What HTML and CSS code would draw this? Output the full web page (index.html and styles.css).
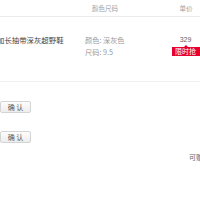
FILE: index.html
```html
<!DOCTYPE html>
<html lang="zh">
<head>
<meta charset="utf-8">
<link rel="stylesheet" href="styles.css">
</head>
<body>
<div class="page">
  <div class="header">
    <span class="h-spec">颜色尺码</span>
    <span class="h-price">单价</span>
  </div>
  <div class="row">
    <div class="name">加长抽带深灰超野鞋</div>
    <div class="spec">
      <div>颜色: 深灰色</div>
      <div>尺码: 9.5</div>
    </div>
    <div class="price">
      <div class="num">329</div>
      <div class="badge">限时抢</div>
    </div>
  </div>
  <div class="actions">
    <button class="btn">确 认</button>
    <button class="btn">确 认</button>
  </div>
  <div class="gift">可赠</div>
</div>
</body>
</html>
```

FILE: styles.css
```css
html, body {
  margin: 0;
  padding: 0;
  background: #fff;
}
body {
  width: 200px;
  height: 200px;
  overflow: hidden;
  font-family: "Noto Sans CJK SC", "Noto Sans", sans-serif;
}
.page {
  width: 200px;
}
.header {
  display: flex;
  align-items: center;
  height: 16px;
  border-bottom: 1px solid #ececec;
  color: #a0a0a0;
  font-size: 6.5px;
}
.h-spec {
  margin-left: 92px;
}
.h-price {
  margin-left: auto;
  width: 28px;
  text-align: center;
}
.row {
  display: flex;
  height: 65px;
  box-sizing: border-box;
  padding-top: 17px;
  border-bottom: 1px solid #f0f0f0;
  font-size: 7px;
  line-height: 12px;
}
.name {
  width: 88px;
  margin-left: -3px;
  color: #444;
  font-size: 7.4px;
  white-space: nowrap;
}
.spec {
  color: #999;
  font-size: 7.2px;
}
.price {
  margin-left: auto;
  width: 29px;
  display: flex;
  flex-direction: column;
  align-items: center;
  color: #666;
}
.num {
  font-family: "Liberation Sans", sans-serif;
}
.badge {
  position: relative;
  margin-top: 1px;
  width: 28px;
  height: 9px;
  line-height: 9px;
  background: #e5002d;
  color: #fff;
  text-align: center;
  font-size: 7px;
}
.badge::before {
  content: "";
  position: absolute;
  left: 12px;
  top: -2px;
  border-left: 2px solid transparent;
  border-right: 2px solid transparent;
  border-bottom: 2px solid #e5002d;
}
.actions {
  display: flex;
  flex-direction: column;
  align-items: flex-start;
  gap: 18px;
  padding-top: 19px;
}
.btn {
  width: 31px;
  height: 12px;
  padding: 0;
  margin: 0;
  border: 1px solid #d4d4d4;
  border-radius: 2px;
  background: linear-gradient(#fdfdfd, #ededed);
  color: #555;
  font-family: "Noto Sans CJK SC", sans-serif;
  font-size: 7px;
  line-height: 10px;
}
.gift {
  margin-top: 9px;
  padding-left: 189px;
  font-size: 7px;
  line-height: 10px;
  color: #666;
  white-space: nowrap;
}
```
